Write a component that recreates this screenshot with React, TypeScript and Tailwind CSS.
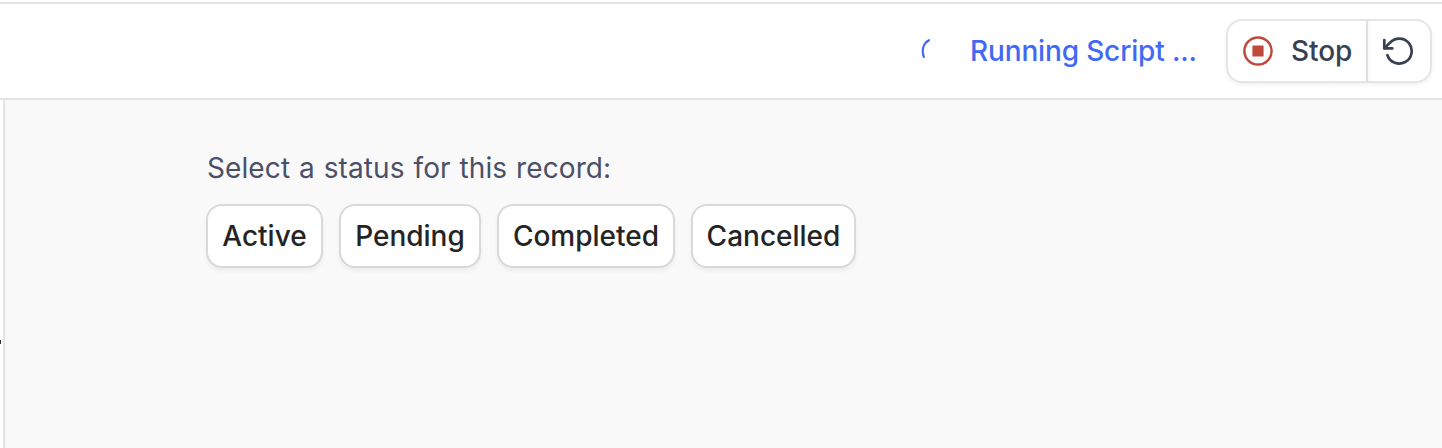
import React from 'react';

const statuses = [
  { label: 'Active', width: 'w-[117px]' },
  { label: 'Pending', width: 'w-[142px]' },
  { label: 'Completed', width: 'w-[178px]' },
  { label: 'Cancelled', width: 'w-[165px]' },
];

function Spinner() {
  return (
    <svg className="h-8 w-8 shrink-0" viewBox="0 0 32 32" fill="none" stroke="#4169f5" strokeWidth="2.1" strokeLinecap="round">
      <path d="M14 5.2C8.5 8 6.1 14.8 8.9 22" />
    </svg>
  );
}

function StopIcon() {
  return (
    <svg className="h-8 w-8 shrink-0" viewBox="0 0 32 32" fill="none">
      <circle cx="16" cy="16" r="13.6" stroke="#c0493b" strokeWidth="2.5" />
      <rect x="10.4" y="10.4" width="11.2" height="11.2" rx="0.6" fill="#c0493b" />
    </svg>
  );
}

function RestartIcon() {
  return (
    <svg className="h-8 w-8 shrink-0" viewBox="0 0 32 32" fill="none" stroke="#374151" strokeWidth="2.7" strokeLinecap="round" strokeLinejoin="round">
      <path d="M2.3 5v8.4h8" />
      <path d="M2.6 13.1L7.8 7.8A12.5 12.5 0 1 1 5.4 20.2" />
    </svg>
  );
}

export default function App() {
  return (
    <div className="flex h-[448px] w-[1442px] flex-col overflow-hidden bg-white pt-[2px] font-['Inter',sans-serif] text-[28px] leading-8">
      <header className="flex h-[98px] shrink-0 items-start justify-end border-y-2 border-[#e4e4e4] pt-[15px] pr-[10px]">
        <div className="flex h-16 items-center font-medium text-[#4169f5]">
          <Spinner />
          <span className="ml-[23px] w-[256px] whitespace-nowrap tracking-[-0.15px]">Running Script ...</span>
        </div>
        <div className="flex h-16 w-[206px] text-[#374151]">
          <button className="flex w-[142px] items-center rounded-l-2xl border-2 border-[#e5e5e5] pl-[14px] font-medium shadow-[0_2px_4px_rgba(0,0,0,0.06)]">
            <StopIcon />
            <span className="ml-[17px] tracking-[-0.1px]">Stop</span>
          </button>
          <button aria-label="Restart" className="flex w-16 items-center rounded-r-2xl border-2 border-l-0 border-[#e5e5e5] pl-[14px] shadow-[0_2px_4px_rgba(0,0,0,0.06)]">
            <RestartIcon />
          </button>
        </div>
      </header>
      <div className="flex flex-1">
        <aside className="w-[3px] shrink-0 pt-[240px]">
          <div className="h-1 w-px bg-[#333]" />
        </aside>
        <main className="flex-1 border-l-2 border-[#e4e4e4] bg-[#f9f9f9] pt-[52px] pl-[201px]">
          <p className="pl-px whitespace-nowrap tracking-[0.1px] [word-spacing:0.9px] text-[#4b5068]">Select a status for this record:</p>
          <div className="mt-5 flex gap-4">
            {statuses.map((status) => (
              <button
                key={status.label}
                className={`${status.width} h-16 shrink-0 rounded-2xl border-2 border-[#d9d9d9] bg-white text-center font-medium text-[#242424] shadow-[0_3px_4px_rgba(0,0,0,0.05)]`}
              >
                {status.label}
              </button>
            ))}
          </div>
        </main>
      </div>
    </div>
  );
}
